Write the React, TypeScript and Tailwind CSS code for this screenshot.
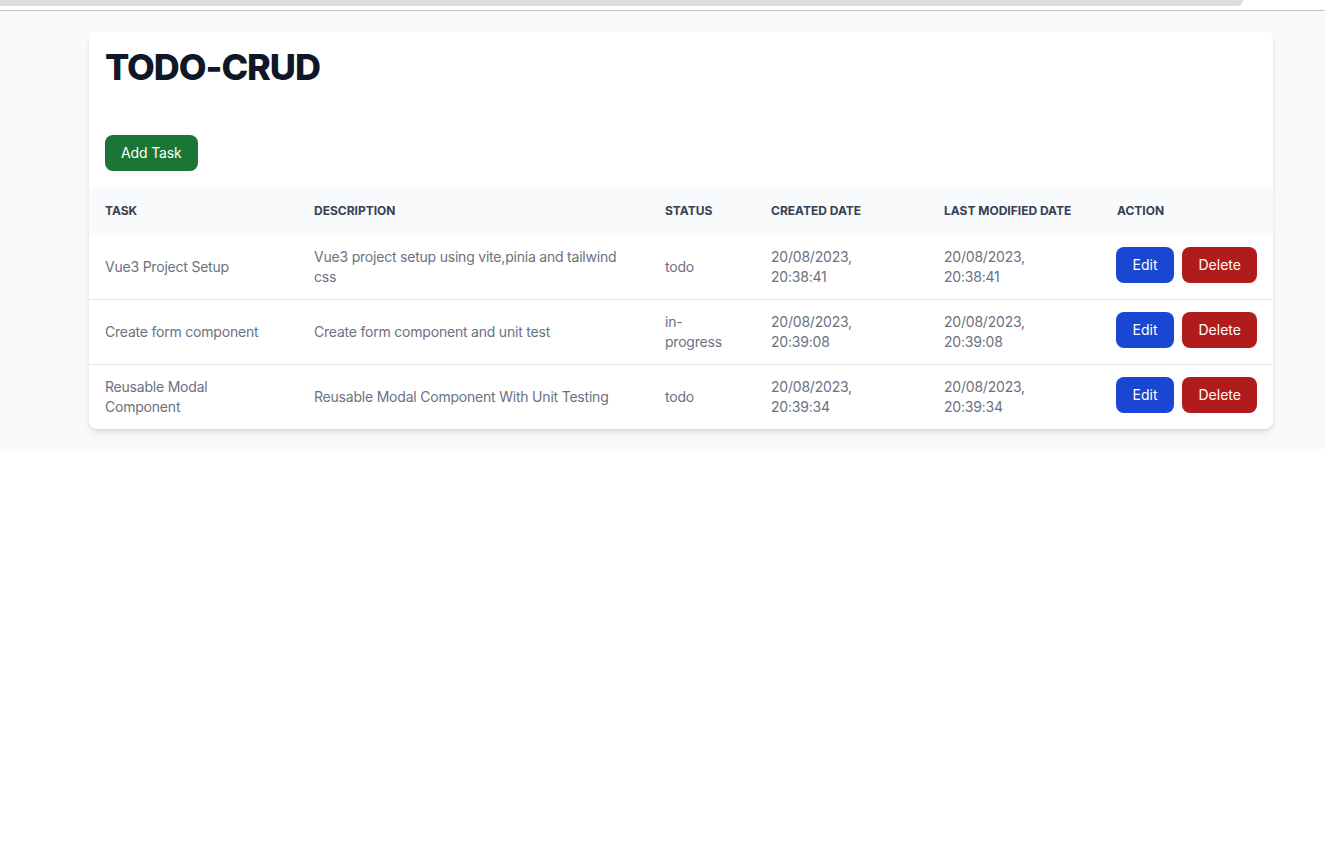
const tasks = [
  {
    task: 'Vue3 Project Setup',
    description: 'Vue3 project setup using vite,pinia and tailwind css',
    status: 'todo',
    created: ['20/08/2023,', '20:38:41'],
    modified: ['20/08/2023,', '20:38:41'],
  },
  {
    task: 'Create form component',
    description: 'Create form component and unit test',
    status: 'in-progress',
    created: ['20/08/2023,', '20:39:08'],
    modified: ['20/08/2023,', '20:39:08'],
  },
  {
    task: 'Reusable Modal Component',
    description: 'Reusable Modal Component With Unit Testing',
    status: 'todo',
    created: ['20/08/2023,', '20:39:34'],
    modified: ['20/08/2023,', '20:39:34'],
  },
];

export default function App() {
  return (
    <div className="min-h-[844px] bg-white font-['Inter',sans-serif]">
      {/* browser chrome strip */}
      <div className="h-[10px] bg-white">
        <div className="h-[6px] w-[1243px] rounded-br-[10px] bg-[#dcdcdc]" />
      </div>
      <div className="border-t border-[#c4c4c4] bg-[#f8f9fa] pt-5 pb-5">
        <div className="ml-[89px] w-[1184px] overflow-hidden rounded-lg bg-white shadow-md">
          <div className="px-4 pt-4 pb-4">
            <h1 className="text-4xl font-extrabold tracking-[-0.03em] text-gray-900">TODO-CRUD</h1>
            <button className="mt-12 rounded-lg bg-[#1a7536] px-4 py-2 text-sm tracking-[-0.01em] text-white">
              Add Task
            </button>
          </div>
          <table className="w-full table-fixed text-left text-sm tracking-[-0.015em] text-gray-500">
            <colgroup>
              <col className="w-[209px]" />
              <col className="w-[351px]" />
              <col className="w-[106px]" />
              <col className="w-[173px]" />
              <col className="w-[173px]" />
              <col className="w-[172px]" />
            </colgroup>
            <thead className="bg-gray-50 text-xs font-bold uppercase tracking-normal text-gray-700">
              <tr>
                <th className="px-4 py-4 font-bold">Task</th>
                <th className="px-4 py-4 font-bold">Description</th>
                <th className="px-4 py-4 font-bold">Status</th>
                <th className="px-4 py-4 font-bold">Created Date</th>
                <th className="px-4 py-4 font-bold">Last Modified Date</th>
                <th className="px-4 py-4 font-bold">Action</th>
              </tr>
            </thead>
            <tbody>
              {tasks.map((t, i) => (
                <tr
                  key={t.task}
                  className={i < tasks.length - 1 ? 'border-b border-gray-200' : ''}
                >
                  <td className="h-16 px-4 py-3 leading-5">{t.task}</td>
                  <td className="px-4 py-3 leading-5">{t.description}</td>
                  <td className="px-4 py-3 leading-5">{t.status}</td>
                  <td className="px-4 py-3 leading-5">
                    {t.created[0]}
                    <br />
                    {t.created[1]}
                  </td>
                  <td className="px-4 py-3 leading-5">
                    {t.modified[0]}
                    <br />
                    {t.modified[1]}
                  </td>
                  <td className="py-3 pr-4 pl-[15px]">
                    <div className="mb-1 flex gap-2 tracking-normal">
                      <button className="rounded-lg bg-[#1a46d4] px-[16.5px] py-2 text-sm text-white">
                        Edit
                      </button>
                      <button className="rounded-lg bg-[#b01c1c] px-[16.5px] py-2 text-sm text-white">
                        Delete
                      </button>
                    </div>
                  </td>
                </tr>
              ))}
            </tbody>
          </table>
        </div>
      </div>
    </div>
  );
}
